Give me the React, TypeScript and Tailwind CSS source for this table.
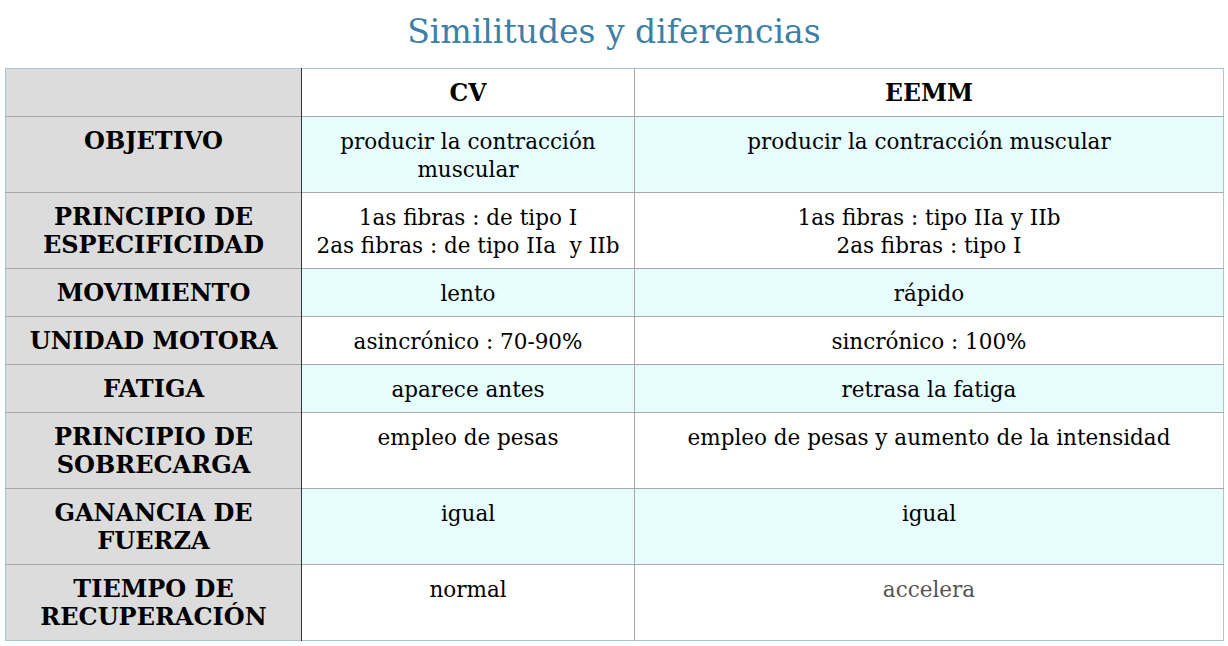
const rows: { label: string[]; cv: string[]; eemm: string[]; tall?: boolean; muted?: boolean }[] = [
  { label: ["OBJETIVO"], cv: ["producir la contracción", "muscular"], eemm: ["producir la contracción muscular"], tall: true },
  { label: ["PRINCIPIO DE", "ESPECIFICIDAD"], cv: ["1as fibras : de tipo I", "2as fibras : de tipo IIa  y IIb"], eemm: ["1as fibras : tipo IIa y IIb", "2as fibras : tipo I"], tall: true },
  { label: ["MOVIMIENTO"], cv: ["lento"], eemm: ["rápido"] },
  { label: ["UNIDAD MOTORA"], cv: ["asincrónico : 70-90%"], eemm: ["sincrónico : 100%"] },
  { label: ["FATIGA"], cv: ["aparece antes"], eemm: ["retrasa la fatiga"] },
  { label: ["PRINCIPIO DE", "SOBRECARGA"], cv: ["empleo de pesas"], eemm: ["empleo de pesas y aumento de la intensidad"], tall: true },
  { label: ["GANANCIA DE", "FUERZA"], cv: ["igual"], eemm: ["igual"], tall: true },
  { label: ["TIEMPO DE", "RECUPERACIÓN"], cv: ["normal"], eemm: ["accelera"], tall: true, muted: true },
]

const Lines = ({ lines }: { lines: string[] }) => (
  <>
    {lines.map((l, i) => (
      <div key={i} className="whitespace-pre">{l}</div>
    ))}
  </>
)

const App = () => {
  return (
    <div className="bg-white w-[1228px] h-[646px] overflow-hidden font-['DejaVu_Serif',serif] text-black">
      <h1 className="text-center text-[33px] leading-[44px] pt-[10px] h-[68px] text-[#3d7fa5]">Similitudes y diferencias</h1>
      <div className="pl-[5px] pr-[4px]">
        <table className="w-full border-collapse table-fixed text-[21.5px] leading-[28px] border border-[#a9c6d3]">
          <colgroup>
            <col className="w-[296px]" />
            <col className="w-[333px]" />
            <col />
          </colgroup>
          <tbody>
            <tr className="h-[48px]">
              <td className="bg-[#dcdcdc] border-r border-r-[#333]" />
              <td className="bg-white text-center font-bold text-[23.5px] align-top pt-[10px] border-r border-[#a8a8a8]">CV</td>
              <td className="bg-white text-center font-bold text-[23.5px] align-top pt-[10px]">EEMM</td>
            </tr>
            {rows.map((r, i) => {
              const bg = i % 2 === 0 ? "bg-[#e6fcfd]" : "bg-white"
              return (
                <tr key={i} className={r.tall ? "h-[76px] border-t border-[#a8a8a8]" : "h-[48px] border-t border-[#a8a8a8]"}>
                  <td className="bg-[#dcdcdc] border-r border-r-[#333] text-center font-bold text-[24px] align-top pt-[10px]">
                    <Lines lines={r.label} />
                  </td>
                  <td className={`${bg} border-r border-[#a8a8a8] text-center align-top pt-[11px]`}>
                    <Lines lines={r.cv} />
                  </td>
                  <td className={`${bg} text-center align-top pt-[11px] ${r.muted ? "text-[#555]" : ""}`}>
                    <Lines lines={r.eemm} />
                  </td>
                </tr>
              )
            })}
          </tbody>
        </table>
      </div>
    </div>
  )
}

export default App
